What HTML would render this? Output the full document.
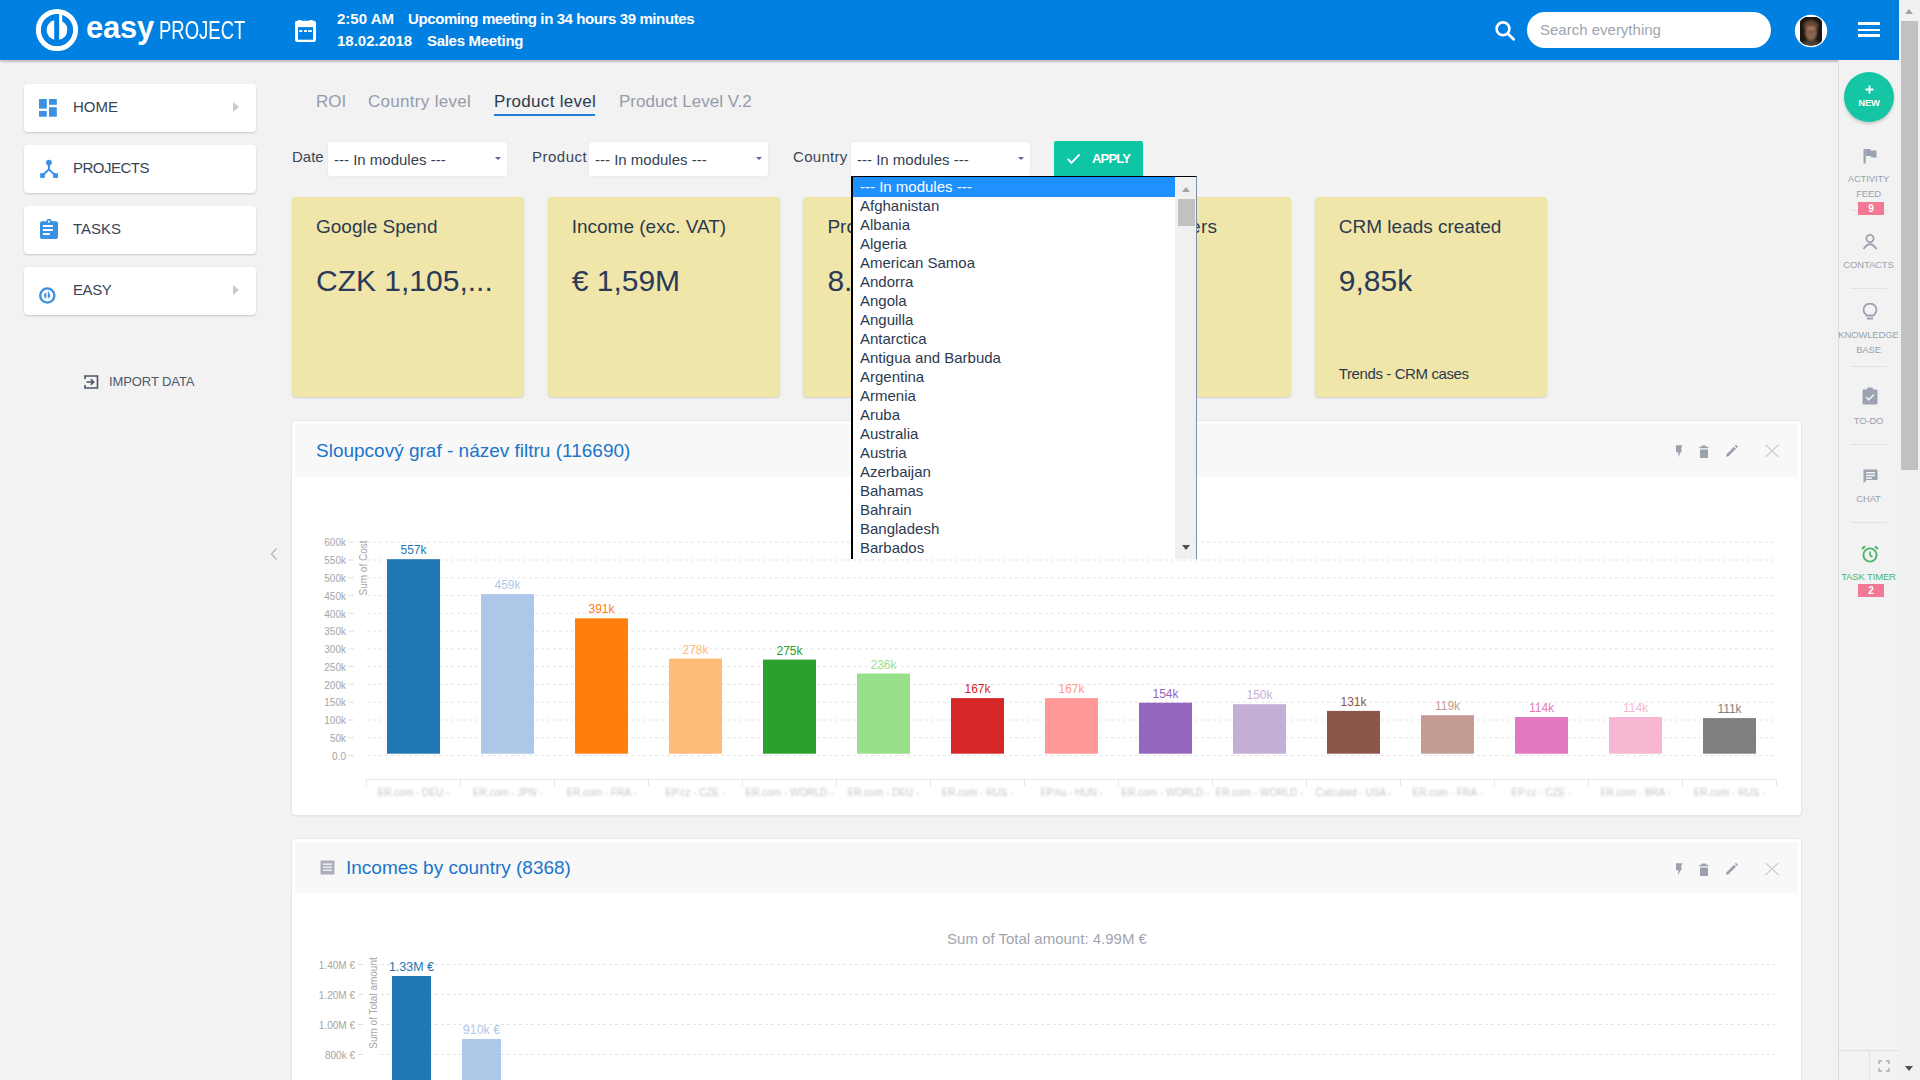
<!DOCTYPE html><html><head><meta charset="utf-8"><title>Easy Project</title><style>
*{margin:0;padding:0;box-sizing:border-box}
html,body{width:1920px;height:1080px;overflow:hidden;background:#f2f2f2;font-family:"Liberation Sans", sans-serif;color:#2c3a4f}
.a{position:absolute}
#hdr{left:0;top:0;width:1899px;height:60px;background:#0080e1;box-shadow:0 1px 3px rgba(0,0,0,.35)}
.ht{color:#fff;font-weight:bold;font-size:15px;white-space:nowrap}
.nav{left:24px;width:232px;height:48px;background:#fff;border-radius:4px;box-shadow:0 1px 2px rgba(0,0,0,.18)}
.nav .t{position:absolute;left:49px;top:14px;font-size:15px;color:#384456}
.nav .ar{position:absolute;left:209px;top:18px;width:0;height:0;border-top:5.5px solid transparent;border-bottom:5.5px solid transparent;border-left:6px solid #c6ccd6}
.tab{top:92px;font-size:17px;color:#949cac;white-space:nowrap}
.lbl{top:148px;font-size:15px;color:#3a4658}
.sel{top:142px;height:34px;background:#fff;border-radius:3px;box-shadow:0 0 0 1px #ececec}
.sel .t{position:absolute;left:6px;top:9px;font-size:15px;color:#333f52;white-space:nowrap}
.sel .ar{position:absolute;right:6px;top:15px;width:0;height:0;border-left:3.2px solid transparent;border-right:3.2px solid transparent;border-top:3.5px solid #5a6690}
.kpi{top:197px;width:232px;height:200px;background:#f0e6aa;border-radius:4px;box-shadow:0 1px 2px rgba(0,0,0,.15)}
.kpi .t{position:absolute;left:24px;top:19px;font-size:19px;color:#2c3a4f;white-space:nowrap}
.kpi .v{position:absolute;left:24px;top:66.5px;font-size:30px;color:#2a3a58;white-space:nowrap}
.kpi .f{position:absolute;left:24px;top:168px;font-size:15px;letter-spacing:-0.4px;color:#2c3a4f;white-space:nowrap}
.pan{left:292px;width:1509px;background:#fff;border-radius:4px;box-shadow:0 0 0 1px #e6e6e6,0 1px 2px rgba(0,0,0,.12)}
.ph{position:absolute;left:3px;top:2px;width:1503px;height:53px;background:#f8f8f9}
.ptitle{position:absolute;font-size:19px;color:#1b75c9;white-space:nowrap}
.ct{font-family:"Liberation Sans", sans-serif;font-size:11px;fill:#999}
.rs{left:1838px;top:60px;width:61px;height:1020px;border-left:1px solid #dcdcdc;background:#f2f2f2}
.rl{position:absolute;width:61px;left:-1px;text-align:center;font-size:9.5px;letter-spacing:-0.15px;color:#9ba2b0;line-height:15px}
.sep{position:absolute;left:12px;width:36px;height:1px;background:#e1e1e1}
.badge{position:absolute;left:19px;width:26px;height:13px;background:#f27894;color:#fff;font-size:10px;font-weight:bold;text-align:center;line-height:13px}
#lb{left:851px;top:176px;width:346px;height:383px;background:#fff;border-left:2px solid #000;border-top:1px solid #000;border-right:1px solid #7d90ab}
#lb .it{position:absolute;left:7px;height:19px;font-size:15px;line-height:19px;color:#2c3a4f;white-space:nowrap}
</style></head><body><div id="hdr" class="a"><svg class="a" style="left:0;top:0" width="260" height="60" viewBox="0 0 260 60">
<circle cx="57" cy="30" r="18.6" fill="none" stroke="#fff" stroke-width="5"/>
<path d="M54.2,20.3 A10,10 0 0 0 54.2,39.7 Z" fill="#fff"/>
<path d="M59.2,14 L62.2,14 L62.2,21.2 A10,10 0 0 1 59.2,39.7 Z" fill="#fff"/>
</svg><div class="a" style="left:86px;top:10px;font-size:31px;font-weight:bold;color:#fff;letter-spacing:-0.2px">easy</div><div class="a" style="left:159px;top:16px;font-size:25px;color:#fff;transform-origin:0 0;transform:scaleX(0.74)">PROJECT</div><svg class="a" style="left:295px;top:20px" width="21" height="22" viewBox="0 0 21 22">
<rect x="0" y="0.8" width="21" height="21.2" rx="2.2" fill="#fff"/>
<rect x="3" y="7.1" width="15" height="12.6" fill="#0080e1"/>
<rect x="4.2" y="10.1" width="3.2" height="1.9" fill="#fff"/><rect x="9" y="10.1" width="3" height="1.9" fill="#fff"/><rect x="13.2" y="10.1" width="3.6" height="1.9" fill="#fff"/>
<ellipse cx="4.8" cy="1" rx="1.8" ry="1" fill="#fff"/><ellipse cx="16.2" cy="1" rx="1.8" ry="1" fill="#fff"/>
</svg><div class="a ht" style="left:337px;top:10px">2:50 AM</div><div class="a ht" style="left:408px;top:10px;letter-spacing:-0.4px">Upcoming meeting in 34 hours 39 minutes</div><div class="a ht" style="left:337px;top:32px">18.02.2018</div><div class="a ht" style="left:427px;top:32px;letter-spacing:-0.3px">Sales Meeting</div><svg class="a" style="left:1493px;top:20px" width="24" height="22" viewBox="0 0 24 22">
<circle cx="10" cy="8.8" r="6.4" fill="none" stroke="#fff" stroke-width="2.6"/>
<line x1="14.6" y1="13.6" x2="20.6" y2="19.2" stroke="#fff" stroke-width="2.8" stroke-linecap="round"/>
</svg><div class="a" style="left:1527px;top:12px;width:244px;height:36px;background:#fff;border-radius:18px"></div><div class="a" style="left:1540px;top:21px;font-size:15px;color:#9ea4af">Search everything</div><svg class="a" style="left:1794px;top:14px" width="34" height="34" viewBox="0 0 34 34">
<defs><clipPath id="avc"><circle cx="17" cy="17" r="15"/></clipPath><filter id="avb"><feGaussianBlur stdDeviation="0.9"/></filter></defs>
<circle cx="17" cy="17" r="16.2" fill="#fff"/>
<g clip-path="url(#avc)"><rect x="6" y="3" width="22" height="28" rx="5" fill="#1c1612"/><g filter="url(#avb)">
<ellipse cx="17" cy="12" rx="7.5" ry="6" fill="#5e4331"/>
<ellipse cx="17" cy="19" rx="6" ry="7.5" fill="#8a6350"/>
<ellipse cx="17" cy="15.5" rx="5" ry="3.2" fill="#a47560"/>
<rect x="13" y="16.5" width="8" height="1.6" fill="#6d4635"/>
<ellipse cx="17" cy="30" rx="9" ry="4" fill="#4a4038"/>
<path d="M9.5,13 Q17,6 24.5,13 Q22,8.5 17,8.2 Q12,8.5 9.5,13 Z" fill="#6e5038"/>
</g></g>
</svg><div class="a" style="left:1858px;top:22px;width:22px;height:2.5px;background:#fff"></div><div class="a" style="left:1858px;top:28.5px;width:22px;height:2.5px;background:#fff"></div><div class="a" style="left:1858px;top:34px;width:22px;height:2.5px;background:#fff"></div></div><div class="a nav" style="top:84px"><svg class="a" style="left:15px;top:15px" width="19" height="19" viewBox="0 0 19 19"><rect x="0" y="0" width="7.8" height="9.6" fill="#3a91e4"/><rect x="10" y="0" width="7.8" height="5.8" fill="#3a91e4"/><rect x="0" y="12" width="7.8" height="5.7" fill="#3a91e4"/><rect x="10" y="8.2" width="7.8" height="9.5" fill="#3a91e4"/></svg><div class="t" style="letter-spacing:0">HOME</div><div class="ar"></div></div><div class="a nav" style="top:145px"><svg class="a" style="left:15px;top:14px" width="20" height="20" viewBox="0 0 20 20"><circle cx="9.9" cy="3.6" r="2.9" fill="#3a91e4"/><path d="M9.9,4 L9.9,10.4 L3.5,16.5 M9.9,10.4 L16.3,16.5" stroke="#3a91e4" stroke-width="2" fill="none"/><rect x="1.15" y="14.2" width="4.7" height="4.7" fill="#3a91e4"/><rect x="14.1" y="14.2" width="4.9" height="4.7" fill="#3a91e4"/></svg><div class="t" style="letter-spacing:-0.5px">PROJECTS</div></div><div class="a nav" style="top:206px"><svg class="a" style="left:15px;top:13px" width="20" height="22" viewBox="0 0 20 22"><rect x="1" y="2.2" width="18" height="17.8" rx="2" fill="#3a91e4"/><path d="M7.3,3 Q7.3,-0.2 10,-0.2 Q12.7,-0.2 12.7,3 Z" fill="#3a91e4"/><circle cx="9.9" cy="2.7" r="1.1" fill="#fff"/><rect x="3.9" y="6" width="10" height="2" fill="#fff"/><rect x="3.9" y="10" width="10" height="2" fill="#fff"/><rect x="3.9" y="14" width="7" height="2" fill="#fff"/></svg><div class="t" style="letter-spacing:0">TASKS</div></div><div class="a nav" style="top:267px"><svg class="a" style="left:14px;top:18px" width="20" height="20" viewBox="0 0 20 20"><circle cx="9.3" cy="10.5" r="7.1" fill="none" stroke="#3a91e4" stroke-width="2.4"/><path d="M8.3,7.6 A3,3 0 0 0 8.3,13.4 Z" fill="#3a91e4"/><path d="M9.8,6.5 L10.9,6.5 L10.9,7.9 A3,3 0 0 1 9.8,13.4 Z" fill="#3a91e4"/></svg><div class="t" style="letter-spacing:-0.4px">EASY</div><div class="ar"></div></div><svg class="a" style="left:84px;top:375px" width="15" height="14" viewBox="0 0 15 14"><path d="M1,4 L1,1 L13.5,1 L13.5,13 L1,13 L1,10" fill="none" stroke="#4a5366" stroke-width="1.6"/><path d="M2.5,7 L9.5,7 M6.8,4.2 L9.6,7 L6.8,9.8" fill="none" stroke="#4a5366" stroke-width="1.6"/></svg><div class="a" style="left:109px;top:374px;font-size:13px;color:#4f586a;letter-spacing:-0.1px">IMPORT DATA</div><svg class="a" style="left:270px;top:547px" width="8" height="14" viewBox="0 0 8 14"><path d="M6.5,1.5 L1.5,7 L6.5,12.5" fill="none" stroke="#b9bec8" stroke-width="1.6"/></svg><div class="a tab" style="left:316px">ROI</div><div class="a tab" style="left:368px;letter-spacing:.3px">Country level</div><div class="a tab" style="left:494px;color:#2c3a4f;letter-spacing:.3px">Product level</div><div class="a" style="left:494px;top:114px;width:101px;height:2px;background:#1f7fd6"></div><div class="a tab" style="left:619px">Product Level V.2</div><div class="a lbl" style="left:292px">Date</div><div class="a sel" style="left:328px;width:179px"><div class="t">--- In modules ---</div><div class="ar"></div></div><div class="a lbl" style="left:532px;letter-spacing:.5px">Product</div><div class="a sel" style="left:589px;width:179px"><div class="t">--- In modules ---</div><div class="ar"></div></div><div class="a lbl" style="left:793px;letter-spacing:.3px">Country</div><div class="a sel" style="left:851px;width:179px"><div class="t">--- In modules ---</div><div class="ar"></div></div><div class="a" style="left:1054px;top:141px;width:89px;height:35px;background:#0ec5a4;border-radius:2px 2px 0 0"></div><svg class="a" style="left:1067px;top:152px" width="15" height="13" viewBox="0 0 15 13"><path d="M0.8,6.9 L4.4,10.9 L12.6,2.3" fill="none" stroke="#fff" stroke-width="1.9"/></svg><div class="a" style="left:1092px;top:151px;font-size:13px;color:#fff;font-weight:bold;letter-spacing:-0.8px">APPLY</div><div class="a kpi" style="left:292px"><div class="t">Google Spend</div><div class="v">CZK 1,105,...</div></div><div class="a kpi" style="left:547.7px"><div class="t">Income (exc. VAT)</div><div class="v">€ 1,59M</div></div><div class="a kpi" style="left:803.4px"><div class="t">Profit</div><div class="v">8.12%</div></div><div class="a kpi" style="left:1059.1px"><div class="t"><span style="letter-spacing:.25px">New customers</span></div><div class="v"></div></div><div class="a kpi" style="left:1314.8px"><div class="t">CRM leads created</div><div class="v">9,85k</div><div class="f">Trends - CRM cases</div></div><div class="a pan" style="top:421px;height:394px"><div class="ph" style="top:3px"></div></div><div class="a ptitle" style="left:316px;top:440px">Sloupcový graf - název filtru (116690)</div><svg class="a" style="left:1670px;top:441px" width="115" height="20" viewBox="0 0 115 20"><path d="M6,4.2 L12.3,4.2 L10.8,8.8 L12.2,8.8 L8,16.3 L8.6,11.2 L6,11.2 Z" fill="#9aa1ad"/><rect x="29.3" y="5.8" width="9.1" height="1.5" rx="0.5" fill="#9aa1ad"/><rect x="31.6" y="4.6" width="4.4" height="1.6" rx="0.6" fill="#9aa1ad"/><path d="M30,8.6 L38,8.6 L38,16 Q38,17 37,17 L31,17 Q30,17 30,16 Z" fill="#9aa1ad"/><path d="M56,15.7 L56.6,13.2 L64,5.8 L66,7.8 L58.5,15.2 Z" fill="#9aa1ad"/><path d="M64.8,5 L66,3.8 L68,5.8 L66.8,7 Z" fill="#9aa1ad"/><path d="M95.5,3.7 L108.6,16.1 M108.6,3.7 L95.5,16.1" stroke="#cfd1d5" stroke-width="1.4"/></svg><svg class="a" style="left:0;top:0" width="1920" height="1080" viewBox="0 0 1920 1080"><text x="346" y="546.4" text-anchor="end" font-family='"Liberation Sans", sans-serif' font-size="10" fill="#a5a5a5">600k</text><line x1="348" y1="542.2" x2="354" y2="542.2" stroke="#e0e0e0" stroke-width="1"/><line x1="367" y1="542.2" x2="1775" y2="542.2" stroke="#e4e4e4" stroke-width="1" stroke-dasharray="3,3"/><text x="346" y="564.2" text-anchor="end" font-family='"Liberation Sans", sans-serif' font-size="10" fill="#a5a5a5">550k</text><line x1="348" y1="560.0" x2="354" y2="560.0" stroke="#e0e0e0" stroke-width="1"/><line x1="367" y1="560.0" x2="1775" y2="560.0" stroke="#e4e4e4" stroke-width="1" stroke-dasharray="3,3"/><text x="346" y="582.0" text-anchor="end" font-family='"Liberation Sans", sans-serif' font-size="10" fill="#a5a5a5">500k</text><line x1="348" y1="577.8" x2="354" y2="577.8" stroke="#e0e0e0" stroke-width="1"/><line x1="367" y1="577.8" x2="1775" y2="577.8" stroke="#e4e4e4" stroke-width="1" stroke-dasharray="3,3"/><text x="346" y="599.7" text-anchor="end" font-family='"Liberation Sans", sans-serif' font-size="10" fill="#a5a5a5">450k</text><line x1="348" y1="595.5" x2="354" y2="595.5" stroke="#e0e0e0" stroke-width="1"/><line x1="367" y1="595.5" x2="1775" y2="595.5" stroke="#e4e4e4" stroke-width="1" stroke-dasharray="3,3"/><text x="346" y="617.5" text-anchor="end" font-family='"Liberation Sans", sans-serif' font-size="10" fill="#a5a5a5">400k</text><line x1="348" y1="613.3" x2="354" y2="613.3" stroke="#e0e0e0" stroke-width="1"/><line x1="367" y1="613.3" x2="1775" y2="613.3" stroke="#e4e4e4" stroke-width="1" stroke-dasharray="3,3"/><text x="346" y="635.3" text-anchor="end" font-family='"Liberation Sans", sans-serif' font-size="10" fill="#a5a5a5">350k</text><line x1="348" y1="631.1" x2="354" y2="631.1" stroke="#e0e0e0" stroke-width="1"/><line x1="367" y1="631.1" x2="1775" y2="631.1" stroke="#e4e4e4" stroke-width="1" stroke-dasharray="3,3"/><text x="346" y="653.1" text-anchor="end" font-family='"Liberation Sans", sans-serif' font-size="10" fill="#a5a5a5">300k</text><line x1="348" y1="648.9" x2="354" y2="648.9" stroke="#e0e0e0" stroke-width="1"/><line x1="367" y1="648.9" x2="1775" y2="648.9" stroke="#e4e4e4" stroke-width="1" stroke-dasharray="3,3"/><text x="346" y="670.8" text-anchor="end" font-family='"Liberation Sans", sans-serif' font-size="10" fill="#a5a5a5">250k</text><line x1="348" y1="666.6" x2="354" y2="666.6" stroke="#e0e0e0" stroke-width="1"/><line x1="367" y1="666.6" x2="1775" y2="666.6" stroke="#e4e4e4" stroke-width="1" stroke-dasharray="3,3"/><text x="346" y="688.6" text-anchor="end" font-family='"Liberation Sans", sans-serif' font-size="10" fill="#a5a5a5">200k</text><line x1="348" y1="684.4" x2="354" y2="684.4" stroke="#e0e0e0" stroke-width="1"/><line x1="367" y1="684.4" x2="1775" y2="684.4" stroke="#e4e4e4" stroke-width="1" stroke-dasharray="3,3"/><text x="346" y="706.4" text-anchor="end" font-family='"Liberation Sans", sans-serif' font-size="10" fill="#a5a5a5">150k</text><line x1="348" y1="702.2" x2="354" y2="702.2" stroke="#e0e0e0" stroke-width="1"/><line x1="367" y1="702.2" x2="1775" y2="702.2" stroke="#e4e4e4" stroke-width="1" stroke-dasharray="3,3"/><text x="346" y="724.2" text-anchor="end" font-family='"Liberation Sans", sans-serif' font-size="10" fill="#a5a5a5">100k</text><line x1="348" y1="720.0" x2="354" y2="720.0" stroke="#e0e0e0" stroke-width="1"/><line x1="367" y1="720.0" x2="1775" y2="720.0" stroke="#e4e4e4" stroke-width="1" stroke-dasharray="3,3"/><text x="346" y="741.9" text-anchor="end" font-family='"Liberation Sans", sans-serif' font-size="10" fill="#a5a5a5">50k</text><line x1="348" y1="737.7" x2="354" y2="737.7" stroke="#e0e0e0" stroke-width="1"/><line x1="367" y1="737.7" x2="1775" y2="737.7" stroke="#e4e4e4" stroke-width="1" stroke-dasharray="3,3"/><text x="346" y="759.7" text-anchor="end" font-family='"Liberation Sans", sans-serif' font-size="10" fill="#a5a5a5">0.0</text><line x1="348" y1="755.5" x2="354" y2="755.5" stroke="#e0e0e0" stroke-width="1"/><line x1="367" y1="755.5" x2="1775" y2="755.5" stroke="#e4e4e4" stroke-width="1" stroke-dasharray="3,3"/><text transform="translate(367,568) rotate(-90)" text-anchor="middle" font-family='"Liberation Sans", sans-serif' font-size="10" fill="#a5a5a5">Sum of Cost</text><rect x="387" y="559.2" width="53" height="194.5" fill="#1f77b4"/><text x="413.5" y="554.2" text-anchor="middle" font-family='"Liberation Sans", sans-serif' font-size="12" fill="#1f77b4">557k</text><rect x="481" y="594.1" width="53" height="159.6" fill="#aec7e8"/><text x="507.5" y="589.1" text-anchor="middle" font-family='"Liberation Sans", sans-serif' font-size="12" fill="#aec7e8">459k</text><rect x="575" y="618.3" width="53" height="135.4" fill="#ff7f0e"/><text x="601.5" y="613.3" text-anchor="middle" font-family='"Liberation Sans", sans-serif' font-size="12" fill="#ff7f0e">391k</text><rect x="669" y="658.6" width="53" height="95.1" fill="#ffbb78"/><text x="695.5" y="653.6" text-anchor="middle" font-family='"Liberation Sans", sans-serif' font-size="12" fill="#ffbb78">278k</text><rect x="763" y="659.6" width="53" height="94.1" fill="#2ca02c"/><text x="789.5" y="654.6" text-anchor="middle" font-family='"Liberation Sans", sans-serif' font-size="12" fill="#2ca02c">275k</text><rect x="857" y="673.5" width="53" height="80.2" fill="#98df8a"/><text x="883.5" y="668.5" text-anchor="middle" font-family='"Liberation Sans", sans-serif' font-size="12" fill="#98df8a">236k</text><rect x="951" y="698.1" width="53" height="55.6" fill="#d62728"/><text x="977.5" y="693.1" text-anchor="middle" font-family='"Liberation Sans", sans-serif' font-size="12" fill="#d62728">167k</text><rect x="1045" y="698.1" width="53" height="55.6" fill="#ff9896"/><text x="1071.5" y="693.1" text-anchor="middle" font-family='"Liberation Sans", sans-serif' font-size="12" fill="#ff9896">167k</text><rect x="1139" y="702.7" width="53" height="51.0" fill="#9467bd"/><text x="1165.5" y="697.7" text-anchor="middle" font-family='"Liberation Sans", sans-serif' font-size="12" fill="#9467bd">154k</text><rect x="1233" y="704.2" width="53" height="49.5" fill="#c5b0d5"/><text x="1259.5" y="699.2" text-anchor="middle" font-family='"Liberation Sans", sans-serif' font-size="12" fill="#c5b0d5">150k</text><rect x="1327" y="710.9" width="53" height="42.8" fill="#8c564b"/><text x="1353.5" y="705.9" text-anchor="middle" font-family='"Liberation Sans", sans-serif' font-size="12" fill="#8c564b">131k</text><rect x="1421" y="715.2" width="53" height="38.5" fill="#c49c94"/><text x="1447.5" y="710.2" text-anchor="middle" font-family='"Liberation Sans", sans-serif' font-size="12" fill="#c49c94">119k</text><rect x="1515" y="717.0" width="53" height="36.7" fill="#e377c2"/><text x="1541.5" y="712.0" text-anchor="middle" font-family='"Liberation Sans", sans-serif' font-size="12" fill="#e377c2">114k</text><rect x="1609" y="717.0" width="53" height="36.7" fill="#f7b6d2"/><text x="1635.5" y="712.0" text-anchor="middle" font-family='"Liberation Sans", sans-serif' font-size="12" fill="#f7b6d2">114k</text><rect x="1703" y="718.1" width="53" height="35.6" fill="#7f7f7f"/><text x="1729.5" y="713.1" text-anchor="middle" font-family='"Liberation Sans", sans-serif' font-size="12" fill="#7f7f7f">111k</text><line x1="366" y1="779.5" x2="1776" y2="779.5" stroke="#e6e6e6" stroke-width="1"/><line x1="366.5" y1="779" x2="366.5" y2="786" stroke="#e6e6e6" stroke-width="1"/><line x1="460.5" y1="779" x2="460.5" y2="786" stroke="#e6e6e6" stroke-width="1"/><line x1="554.5" y1="779" x2="554.5" y2="786" stroke="#e6e6e6" stroke-width="1"/><line x1="648.5" y1="779" x2="648.5" y2="786" stroke="#e6e6e6" stroke-width="1"/><line x1="742.5" y1="779" x2="742.5" y2="786" stroke="#e6e6e6" stroke-width="1"/><line x1="836.5" y1="779" x2="836.5" y2="786" stroke="#e6e6e6" stroke-width="1"/><line x1="930.5" y1="779" x2="930.5" y2="786" stroke="#e6e6e6" stroke-width="1"/><line x1="1024.5" y1="779" x2="1024.5" y2="786" stroke="#e6e6e6" stroke-width="1"/><line x1="1118.5" y1="779" x2="1118.5" y2="786" stroke="#e6e6e6" stroke-width="1"/><line x1="1212.5" y1="779" x2="1212.5" y2="786" stroke="#e6e6e6" stroke-width="1"/><line x1="1306.5" y1="779" x2="1306.5" y2="786" stroke="#e6e6e6" stroke-width="1"/><line x1="1400.5" y1="779" x2="1400.5" y2="786" stroke="#e6e6e6" stroke-width="1"/><line x1="1494.5" y1="779" x2="1494.5" y2="786" stroke="#e6e6e6" stroke-width="1"/><line x1="1588.5" y1="779" x2="1588.5" y2="786" stroke="#e6e6e6" stroke-width="1"/><line x1="1682.5" y1="779" x2="1682.5" y2="786" stroke="#e6e6e6" stroke-width="1"/><line x1="1776.5" y1="779" x2="1776.5" y2="786" stroke="#e6e6e6" stroke-width="1"/><g filter="url(#bl)"><text x="413.5" y="796" text-anchor="middle" font-family='"Liberation Sans", sans-serif' font-size="10" fill="#c4c4c4">ER.com - DEU -</text><text x="507.5" y="796" text-anchor="middle" font-family='"Liberation Sans", sans-serif' font-size="10" fill="#c4c4c4">ER.com - JPN -</text><text x="601.5" y="796" text-anchor="middle" font-family='"Liberation Sans", sans-serif' font-size="10" fill="#c4c4c4">ER.com - FRA -</text><text x="695.5" y="796" text-anchor="middle" font-family='"Liberation Sans", sans-serif' font-size="10" fill="#c4c4c4">EP.cz - CZE -</text><text x="789.5" y="796" text-anchor="middle" font-family='"Liberation Sans", sans-serif' font-size="10" fill="#c4c4c4">ER.com - WORLD -</text><text x="883.5" y="796" text-anchor="middle" font-family='"Liberation Sans", sans-serif' font-size="10" fill="#c4c4c4">ER.com - DEU -</text><text x="977.5" y="796" text-anchor="middle" font-family='"Liberation Sans", sans-serif' font-size="10" fill="#c4c4c4">ER.com - RUS -</text><text x="1071.5" y="796" text-anchor="middle" font-family='"Liberation Sans", sans-serif' font-size="10" fill="#c4c4c4">EP.hu - HUN -</text><text x="1165.5" y="796" text-anchor="middle" font-family='"Liberation Sans", sans-serif' font-size="10" fill="#c4c4c4">ER.com - WORLD -</text><text x="1259.5" y="796" text-anchor="middle" font-family='"Liberation Sans", sans-serif' font-size="10" fill="#c4c4c4">ER.com - WORLD -</text><text x="1353.5" y="796" text-anchor="middle" font-family='"Liberation Sans", sans-serif' font-size="10" fill="#c4c4c4">Calculaid - USA -</text><text x="1447.5" y="796" text-anchor="middle" font-family='"Liberation Sans", sans-serif' font-size="10" fill="#c4c4c4">ER.com - FRA -</text><text x="1541.5" y="796" text-anchor="middle" font-family='"Liberation Sans", sans-serif' font-size="10" fill="#c4c4c4">EP.cz - CZE -</text><text x="1635.5" y="796" text-anchor="middle" font-family='"Liberation Sans", sans-serif' font-size="10" fill="#c4c4c4">ER.com - BRA -</text><text x="1729.5" y="796" text-anchor="middle" font-family='"Liberation Sans", sans-serif' font-size="10" fill="#c4c4c4">ER.com - RUS -</text></g><defs><filter id="bl" x="-5%" y="-50%" width="110%" height="200%"><feGaussianBlur stdDeviation="1.1"/></filter></defs></svg><div class="a pan" style="top:839px;height:260px"><div class="ph" style="top:3px;height:51px"></div></div><svg class="a" style="left:320px;top:860px" width="16" height="15" viewBox="0 0 16 15"><rect x="0.5" y="0.5" width="14" height="14" fill="#a9aeb7"/><rect x="3" y="3.5" width="9" height="1.3" fill="#f8f8f9"/><rect x="3" y="6.5" width="9" height="1.3" fill="#f8f8f9"/><rect x="3" y="9.5" width="9" height="1.3" fill="#f8f8f9"/></svg><div class="a ptitle" style="left:346px;top:857px">Incomes by country (8368)</div><svg class="a" style="left:1670px;top:859px" width="115" height="20" viewBox="0 0 115 20"><path d="M6,4.2 L12.3,4.2 L10.8,8.8 L12.2,8.8 L8,16.3 L8.6,11.2 L6,11.2 Z" fill="#9aa1ad"/><rect x="29.3" y="5.8" width="9.1" height="1.5" rx="0.5" fill="#9aa1ad"/><rect x="31.6" y="4.6" width="4.4" height="1.6" rx="0.6" fill="#9aa1ad"/><path d="M30,8.6 L38,8.6 L38,16 Q38,17 37,17 L31,17 Q30,17 30,16 Z" fill="#9aa1ad"/><path d="M56,15.7 L56.6,13.2 L64,5.8 L66,7.8 L58.5,15.2 Z" fill="#9aa1ad"/><path d="M64.8,5 L66,3.8 L68,5.8 L66.8,7 Z" fill="#9aa1ad"/><path d="M95.5,3.7 L108.6,16.1 M108.6,3.7 L95.5,16.1" stroke="#cfd1d5" stroke-width="1.4"/></svg><svg class="a" style="left:0;top:0" width="1920" height="1080" viewBox="0 0 1920 1080"><text x="1047" y="944" text-anchor="middle" font-family='"Liberation Sans", sans-serif' font-size="15" fill="#9ea4b0">Sum of Total amount: 4.99M €</text><text x="355" y="968.5" text-anchor="end" font-family='"Liberation Sans", sans-serif' font-size="10" fill="#a5a5a5">1.40M €</text><line x1="358" y1="964.5" x2="363" y2="964.5" stroke="#e0e0e0"/><line x1="381" y1="964.5" x2="1775" y2="964.5" stroke="#e4e4e4" stroke-dasharray="3,3"/><text x="355" y="998.5" text-anchor="end" font-family='"Liberation Sans", sans-serif' font-size="10" fill="#a5a5a5">1.20M €</text><line x1="358" y1="994.5" x2="363" y2="994.5" stroke="#e0e0e0"/><line x1="381" y1="994.5" x2="1775" y2="994.5" stroke="#e4e4e4" stroke-dasharray="3,3"/><text x="355" y="1028.5" text-anchor="end" font-family='"Liberation Sans", sans-serif' font-size="10" fill="#a5a5a5">1.00M €</text><line x1="358" y1="1024.5" x2="363" y2="1024.5" stroke="#e0e0e0"/><line x1="381" y1="1024.5" x2="1775" y2="1024.5" stroke="#e4e4e4" stroke-dasharray="3,3"/><text x="355" y="1058.5" text-anchor="end" font-family='"Liberation Sans", sans-serif' font-size="10" fill="#a5a5a5">800k €</text><line x1="358" y1="1054.5" x2="363" y2="1054.5" stroke="#e0e0e0"/><line x1="381" y1="1054.5" x2="1775" y2="1054.5" stroke="#e4e4e4" stroke-dasharray="3,3"/><text transform="translate(377,1003) rotate(-90)" text-anchor="middle" font-family='"Liberation Sans", sans-serif' font-size="10" fill="#a5a5a5">Sum of Total amount</text><rect x="392" y="976" width="39" height="110" fill="#1f77b4"/><text x="411.5" y="971" text-anchor="middle" font-family='"Liberation Sans", sans-serif' font-size="12.5" fill="#1f77b4">1.33M €</text><rect x="462" y="1039" width="39" height="50" fill="#aec7e8"/><text x="481.5" y="1034" text-anchor="middle" font-family='"Liberation Sans", sans-serif' font-size="12.5" fill="#aec7e8">910k €</text></svg><div class="a rs"><div class="a" style="left:5px;top:12px;width:50px;height:50px;border-radius:50%;background:#14c6a4;box-shadow:0 2px 3px rgba(0,0,0,.18)"></div><svg class="a" style="left:26px;top:25px" width="9" height="9" viewBox="0 0 9 9"><path d="M4.5,0.5 V8.5 M0.5,4.5 H8.5" stroke="#fff" stroke-width="1.8"/></svg><div class="a" style="left:5px;top:36.5px;width:50px;text-align:center;font-size:9.5px;font-weight:bold;color:#fff;letter-spacing:-0.3px">NEW</div><svg class="a" style="left:24px;top:88px" width="15" height="16" viewBox="0 0 15 16"><rect x="0.5" y="1" width="2.2" height="14.5" fill="#9ba2b0"/><path d="M2.5,1 L7,1 L8,2.5 L13.5,2.5 L13.5,9.5 L8.5,9.5 L7.5,8 L2.5,8 Z" fill="#9ba2b0"/></svg><div class="rl" style="top:111px">ACTIVITY<br>FEED</div><div class="sep" style="top:150px"></div><div class="badge" style="top:142px">9</div><svg class="a" style="left:23px;top:174px" width="16" height="16" viewBox="0 0 16 16"><circle cx="8" cy="4.5" r="3.6" fill="none" stroke="#9ba2b0" stroke-width="1.8"/><path d="M1.5,15 Q8,5.5 14.5,15" fill="none" stroke="#9ba2b0" stroke-width="1.8"/></svg><div class="rl" style="top:197px">CONTACTS</div><div class="sep" style="top:228px"></div><svg class="a" style="left:23px;top:243px" width="16" height="18" viewBox="0 0 16 18"><path d="M4.5,12.5 Q1.5,10 1.5,7 A6.5,6.5 0 0 1 14.5,7 Q14.5,10 11.5,12.5 Z" fill="none" stroke="#9ba2b0" stroke-width="1.8"/><rect x="5" y="14.5" width="6" height="2" fill="#9ba2b0"/></svg><div class="rl" style="top:267px">KNOWLEDGE<br>BASE</div><div class="sep" style="top:306px"></div><svg class="a" style="left:23px;top:327px" width="16" height="18" viewBox="0 0 16 18"><rect x="0.5" y="2.5" width="15" height="15" rx="1.2" fill="#9ba2b0"/><rect x="5" y="0.5" width="6" height="4" rx="1" fill="#9ba2b0"/><path d="M4,10 L6.8,12.8 L12,7.5" fill="none" stroke="#f1f1f1" stroke-width="1.7"/></svg><div class="rl" style="top:353px">TO-DO</div><div class="sep" style="top:384px"></div><svg class="a" style="left:23px;top:408px" width="17" height="17" viewBox="0 0 17 17"><path d="M1.5,1.5 H15.5 V12 H4.5 L1.5,15.5 Z" fill="#9ba2b0"/><rect x="4" y="4" width="9" height="1.5" fill="#f1f1f1"/><rect x="4" y="6.8" width="9" height="1.5" fill="#f1f1f1"/><rect x="4" y="9.5" width="6" height="1.5" fill="#f1f1f1"/></svg><div class="rl" style="top:431px">CHAT</div><div class="sep" style="top:462px"></div><svg class="a" style="left:22px;top:485px" width="18" height="18" viewBox="0 0 18 18"><circle cx="9" cy="10" r="6.6" fill="none" stroke="#4cb56a" stroke-width="1.9"/><path d="M9,6.5 V10.3 L11.5,12" fill="none" stroke="#4cb56a" stroke-width="1.6"/><path d="M1,4 L4,1.2 M17,4 L14,1.2" stroke="#4cb56a" stroke-width="2"/></svg><div class="rl" style="top:509px;color:#4cb56a">TASK TIMER</div><div class="badge" style="top:524px">2</div><div class="a" style="left:0;top:990px;width:61px;height:1px;background:#e0e0e0"></div><div class="a" style="left:30px;top:990px;width:1px;height:30px;background:#e0e0e0"></div><svg class="a" style="left:39px;top:1000px" width="12" height="12" viewBox="0 0 12 12"><path d="M1,4 V1 H4 M8,1 H11 V4 M11,8 V11 H8 M4,11 H1 V8" fill="none" stroke="#a9aeb7" stroke-width="1.5"/></svg></div><div class="a" style="left:1899px;top:0;width:21px;height:1080px;background:#f1f1f1"></div><div class="a" style="left:1901px;top:21px;width:17px;height:449px;background:#c1c1c1"></div><div class="a" style="left:1905px;top:9px;width:0;height:0;border-left:4.5px solid transparent;border-right:4.5px solid transparent;border-bottom:5px solid #a3a3a3"></div><div class="a" style="left:1905px;top:1066px;width:0;height:0;border-left:4.5px solid transparent;border-right:4.5px solid transparent;border-top:5px solid #505050"></div><div id="lb" class="a"><div class="a" style="left:0;top:0;width:322px;height:20px;background:#1e90ff"></div><div class="it" style="top:0px;color:#fff">--- In modules ---</div><div class="it" style="top:19px;color:#2c3a4f">Afghanistan</div><div class="it" style="top:38px;color:#2c3a4f">Albania</div><div class="it" style="top:57px;color:#2c3a4f">Algeria</div><div class="it" style="top:76px;color:#2c3a4f">American Samoa</div><div class="it" style="top:95px;color:#2c3a4f">Andorra</div><div class="it" style="top:114px;color:#2c3a4f">Angola</div><div class="it" style="top:133px;color:#2c3a4f">Anguilla</div><div class="it" style="top:152px;color:#2c3a4f">Antarctica</div><div class="it" style="top:171px;color:#2c3a4f">Antigua and Barbuda</div><div class="it" style="top:190px;color:#2c3a4f">Argentina</div><div class="it" style="top:209px;color:#2c3a4f">Armenia</div><div class="it" style="top:228px;color:#2c3a4f">Aruba</div><div class="it" style="top:247px;color:#2c3a4f">Australia</div><div class="it" style="top:266px;color:#2c3a4f">Austria</div><div class="it" style="top:285px;color:#2c3a4f">Azerbaijan</div><div class="it" style="top:304px;color:#2c3a4f">Bahamas</div><div class="it" style="top:323px;color:#2c3a4f">Bahrain</div><div class="it" style="top:342px;color:#2c3a4f">Bangladesh</div><div class="it" style="top:361px;color:#2c3a4f">Barbados</div><div class="a" style="left:322px;top:0;width:21px;height:382px;background:#f0f0f0"></div><div class="a" style="left:325px;top:22px;width:17px;height:27px;background:#c1c1c1"></div><div class="a" style="left:329px;top:10px;width:0;height:0;border-left:4.5px solid transparent;border-right:4.5px solid transparent;border-bottom:5px solid #a3a3a3"></div><div class="a" style="left:329px;top:368px;width:0;height:0;border-left:4.5px solid transparent;border-right:4.5px solid transparent;border-top:5px solid #505050"></div></div></body></html>
